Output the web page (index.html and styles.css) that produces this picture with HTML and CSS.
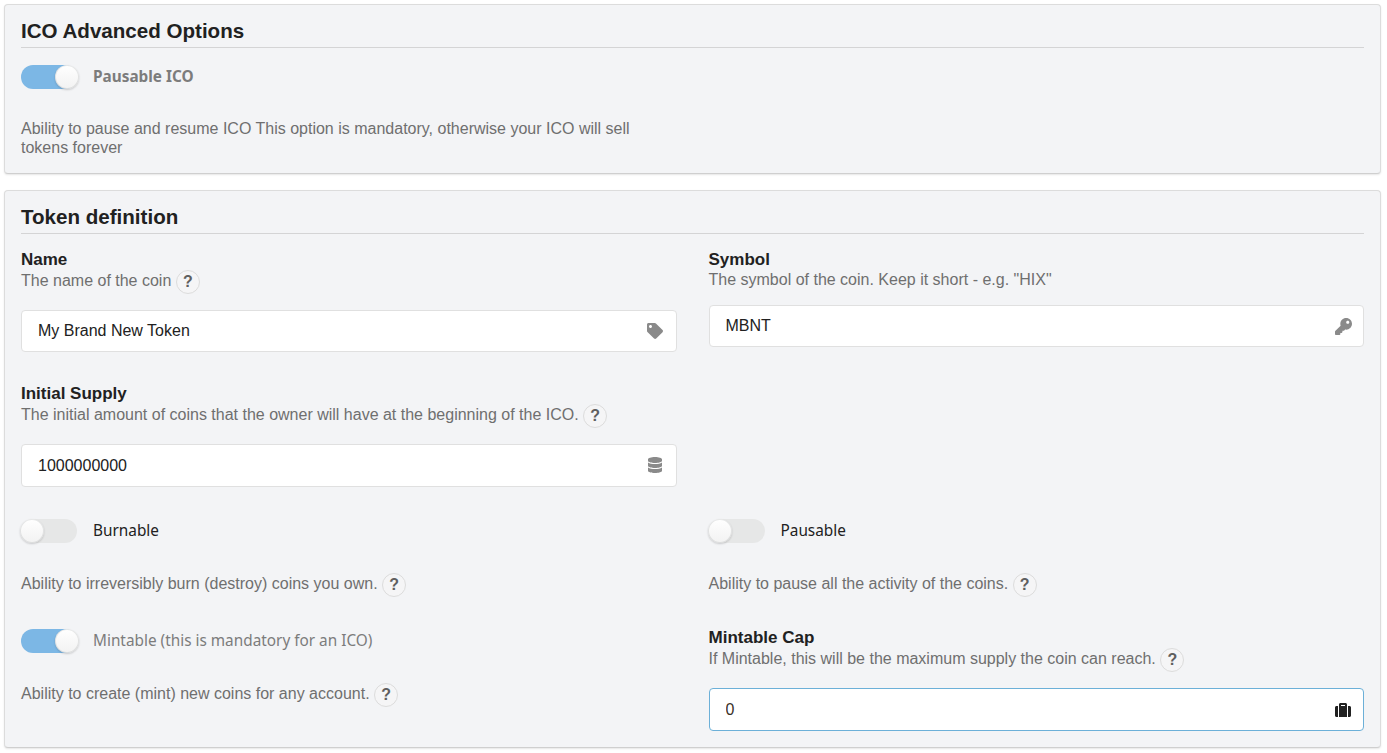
FILE: index.html
```
<!DOCTYPE html>
<html lang="en">
<head>
<meta charset="utf-8">
<title>ICO Options</title>
<link rel="stylesheet" href="styles.css">
</head>
<body>
<section class="card card-first">
  <h2 class="card-title">ICO Advanced Options</h2>
  <div class="switch-row">
    <span class="toggle on"><span class="knob"></span></span>
    <span class="switch-label strong">Pausable ICO</span>
  </div>
  <p class="note narrow">Ability to pause and resume ICO This option is mandatory, otherwise your ICO will sell tokens forever</p>
</section>

<section class="card">
  <h2 class="card-title">Token definition</h2>
  <div class="grid">
    <div class="field f-name">
      <div class="label">Name</div>
      <div class="desc">The name of the coin <span class="help">?</span></div>
      <div class="input-wrap">
        <input class="input" value="My Brand New Token">
        <svg class="icon" viewBox="0 0 512 512"><path d="M0 252.118V48C0 21.49 21.49 0 48 0h204.118a48 48 0 0 1 33.941 14.059l211.882 211.882c18.745 18.745 18.745 49.137 0 67.882L293.823 497.941c-18.745 18.745-49.137 18.745-67.882 0L14.059 286.059A48 48 0 0 1 0 252.118zM112 64c-26.51 0-48 21.49-48 48s21.49 48 48 48 48-21.49 48-48-21.49-48-48-48z"/></svg>
      </div>
    </div>
    <div class="field f-symbol">
      <div class="label">Symbol</div>
      <div class="desc">The symbol of the coin. Keep it short - e.g. "HIX"</div>
      <div class="input-wrap">
        <input class="input" value="MBNT">
        <svg class="icon icon-key" viewBox="0 0 512 512"><path d="M512 176.001C512 273.203 433.202 352 336 352c-11.22 0-22.19-1.062-32.827-3.069l-24.012 27.014A23.999 23.999 0 0 1 261.223 384H224v40c0 13.255-10.745 24-24 24h-40v40c0 13.255-10.745 24-24 24H24c-13.255 0-24-10.745-24-24v-78.059c0-6.365 2.529-12.47 7.029-16.971l161.802-161.802C163.108 213.814 160 195.271 160 176 160 78.798 238.797.001 335.999 0 433.488-.001 512 78.511 512 176.001zM336 128c0 26.51 21.49 48 48 48s48-21.49 48-48-21.49-48-48-48-48 21.49-48 48z"/></svg>
      </div>
    </div>
    <div class="field f-supply">
      <div class="label">Initial Supply</div>
      <div class="desc">The initial amount of coins that the owner will have at the beginning of the ICO. <span class="help">?</span></div>
      <div class="input-wrap">
        <input class="input tall" value="1000000000">
        <svg class="icon" viewBox="0 0 448 512"><path d="M448 73.143v45.714C448 159.143 347.667 192 224 192S0 159.143 0 118.857V73.143C0 32.857 100.333 0 224 0s224 32.857 224 73.143zM448 176v102.857C448 319.143 347.667 352 224 352S0 319.143 0 278.857V176c48.125 33.143 136.208 48.572 224 48.572S399.874 209.143 448 176zm0 160v102.857C448 479.143 347.667 512 224 512S0 479.143 0 438.857V336c48.125 33.143 136.208 48.572 224 48.572S399.874 369.143 448 336z"/></svg>
      </div>
    </div>
    <div class="field f-spacer"></div>
    <div class="field f-switch">
      <div class="switch-row">
        <span class="toggle"><span class="knob"></span></span>
        <span class="switch-label">Burnable</span>
      </div>
      <div class="desc switch-desc">Ability to irreversibly burn (destroy) coins you own. <span class="help">?</span></div>
    </div>
    <div class="field f-switch">
      <div class="switch-row">
        <span class="toggle"><span class="knob"></span></span>
        <span class="switch-label">Pausable</span>
      </div>
      <div class="desc switch-desc">Ability to pause all the activity of the coins. <span class="help">?</span></div>
    </div>
    <div class="field f-mint">
      <div class="switch-row">
        <span class="toggle on"><span class="knob"></span></span>
        <span class="switch-label muted">Mintable (this is mandatory for an ICO)</span>
      </div>
      <div class="desc switch-desc">Ability to create (mint) new coins for any account. <span class="help">?</span></div>
    </div>
    <div class="field f-cap">
      <div class="label">Mintable Cap</div>
      <div class="desc">If Mintable, this will be the maximum supply the coin can reach. <span class="help">?</span></div>
      <div class="input-wrap">
        <input class="input tall focus" value="0">
        <svg class="icon dark" viewBox="0 0 512 512"><path d="M128 480h256V80c0-26.5-21.5-48-48-48H176c-26.5 0-48 21.5-48 48v400zm64-384h128v32H192V96zm320 80v256c0 26.5-21.5 48-48 48h-48V128h48c26.5 0 48 21.5 48 48zM96 480H48c-26.5 0-48-21.5-48-48V176c0-26.5 21.5-48 48-48h48v352z"/></svg>
      </div>
    </div>
  </div>
</section>
</body>
</html>
```
FILE: styles.css
```
* { box-sizing: border-box; }
html, body { height: 100%; }
body {
  margin: 0;
  padding: 4px 6px 0 4px;
  background: #fff;
  color: #212121;
  font-family: "Liberation Sans", Arial, sans-serif;
  font-size: 16px;
  overflow: hidden;
}
.card {
  background: #f3f4f6;
  border: 1px solid #dcdcdc;
  border-bottom-color: #cfcfcf;
  border-radius: 4px;
  box-shadow: 0 1px 2px rgba(0, 0, 0, .1);
  padding: 14px 16px 16px;
}
.card-first { height: 170px; margin-bottom: 16px; }
.card-title {
  margin: 0;
  font-size: 20.57px;
  line-height: 24px;
  font-weight: 700;
  padding-bottom: 4px;
  border-bottom: 1px solid #d4d4d5;
  color: #212121;
}
.switch-row {
  display: flex;
  align-items: center;
  height: 24px;
}
.card-first .switch-row { margin-top: 17px; }
.toggle {
  position: relative;
  flex: none;
  width: 56px;
  height: 24px;
  border-radius: 12px;
  background: #e6e7e7;
  margin-right: 16px;
}
.toggle.on { background: #7cb7e5; }
.knob {
  position: absolute;
  top: 0;
  left: -1px;
  width: 24px;
  height: 24px;
  border-radius: 50%;
  background: linear-gradient(#fff, #f2f2f2);
  box-shadow: 0 1px 2px rgba(34, 36, 38, .2), 0 0 0 1px rgba(34, 36, 38, .1) inset;
}
.toggle.on .knob { left: 34px; }
.switch-label {
  font-family: "Noto Sans", Roboto, sans-serif;
  font-size: 15.35px;
  color: #212121;
  margin-bottom: 2px;
}
.switch-label.strong { font-weight: 700; color: #7c7c7c; }
.switch-label.muted { color: #7c7c7c; }
.note {
  margin: 30px 0 0;
  line-height: 19px;
  color: #6f6f6f;
}
.note.narrow { width: 640px; }
.grid {
  display: grid;
  grid-template-columns: 1fr 1fr;
  column-gap: 32px;
  align-items: start;
  padding-top: 16px;
}
.label {
  font-size: 17px;
  line-height: 20px;
  font-weight: 700;
  color: #212121;
}
.desc {
  color: #6f6f6f;
  line-height: 19px;
}
.help {
  display: inline-block;
  vertical-align: middle;
  width: 24px;
  height: 24px;
  border-radius: 50%;
  border: 1px solid #dcdcdc;
  background: #f5f5f6;
  color: #5f5f5f;
  font-size: 16px;
  font-weight: 700;
  line-height: 22px;
  text-align: center;
}
.input-wrap { position: relative; margin-top: 16px; }
.input {
  display: block;
  width: 100%;
  height: 42px;
  padding: 0 40px 0 16px;
  border: 1px solid #e0e0e0;
  border-radius: 4px;
  background: #fff;
  color: #212121;
  font: 16px "Liberation Sans", Arial, sans-serif;
  outline: none;
}
.input.tall { height: 43px; }
.input.focus { border-color: #6cb0d8; color: #3a3028; }
.icon {
  position: absolute;
  right: 14px;
  top: 13px;
  width: 16px;
  height: 16px;
  fill: #8a8a8a;
}
.icon-key { right: 12px; width: 17px; height: 17px; }
.icon.dark { fill: #212121; right: 13px; top: 14px; }
.f-name, .f-symbol { height: 134px; }
.f-supply, .f-spacer { height: 135px; }
.f-switch { height: 110px; }
.switch-desc { margin-top: 30px; }
.f-cap { margin-top: -1px; }
```
